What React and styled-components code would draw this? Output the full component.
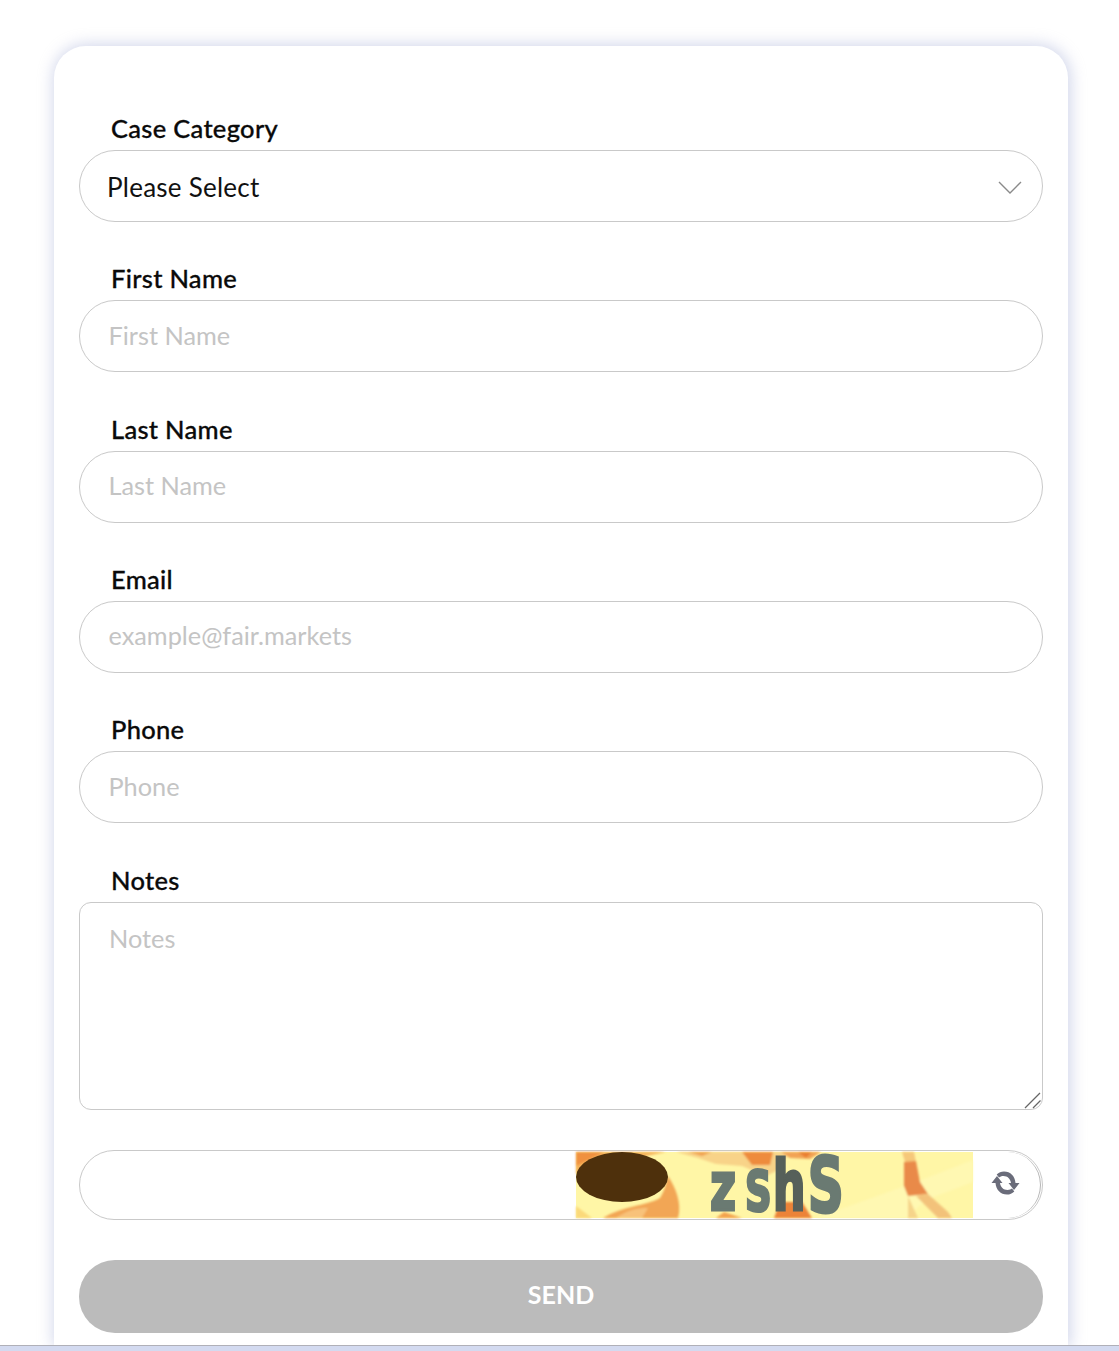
import React from "react";
import styled, { createGlobalStyle } from "styled-components";

const Global = createGlobalStyle`
  html, body { margin: 0; padding: 0; background: #fff; }
  body { font-family: "Lato", "Open Sans", sans-serif; overflow: hidden; }
  * { box-sizing: border-box; }
`;
const Page = styled.div`
  height: 1351px;
  overflow: hidden;
  padding: 46px 51px 0 54px;
  position: relative;
`;
const Card = styled.form`
  background: #fff;
  border-radius: 32px 32px 0 0;
  box-shadow: 1px 0 15px 2px rgba(188, 196, 226, 0.68);
  padding: 68px 25px 0;
  height: 1299px;
  display: flex;
  flex-direction: column;
`;
const Field = styled.div`
  display: flex;
  flex-direction: column;
  height: ${(p) => p.$h || 150.33}px;
`;
const Label = styled.label`
  font-size: 25.5px;
  font-weight: 500;
  letter-spacing: 0.3px;
  color: #0a0a0a;
  line-height: 29px;
  height: 36px;
  padding: 0 0 0 32px;
  -webkit-text-stroke: 0.3px #0a0a0a;
`;
const Input = styled.input`
  height: 72px;
  width: 100%;
  border: 1px solid #c9c9c9;
  border-radius: 36px;
  padding: 0 29px 3px 28.5px;
  font: inherit;
  font-size: 25.3px;
  outline: none;
  background: #fff;
  &::placeholder { color: #c4c4c4; opacity: 1; }
`;
const SelectBox = styled.div`
  height: 72px;
  border: 1px solid #c9c9c9;
  border-radius: 36px;
  padding: 1px 20px 0 27px;
  font-size: 26px;
  letter-spacing: 0.25px;
  color: #111;
  display: flex;
  align-items: center;
  justify-content: space-between;
`;
const SelectArrow = styled.svg`
  margin-top: 3px;
  flex: none;
`;
const NotesWrap = styled.div`
  position: relative;
  height: 208px;
`;
const Notes = styled.textarea`
  display: block;
  width: 100%;
  height: 100%;
  border: 1px solid #c9c9c9;
  border-radius: 12px;
  padding: 20px 29px;
  font: inherit;
  font-size: 25.3px;
  outline: none;
  resize: none;
  &::placeholder { color: #c4c4c4; opacity: 1; }
`;
const Grip = styled.svg`
  position: absolute;
  right: 1px;
  bottom: 1px;
`;
const CaptchaRow = styled.div`
  height: 70px;
  margin-top: 4px;
  border: 1px solid #c9c9c9;
  border-radius: 35px;
  display: flex;
  align-items: stretch;
`;
const CaptchaInput = styled.input`
  flex: 1;
  min-width: 0;
  border: none;
  outline: none;
  background: transparent;
  border-radius: 35px 0 0 35px;
`;
const CaptchaImage = styled.svg`
  width: 397px;
  height: 66px;
  margin-top: 1px;
  display: block;
  flex: none;
  overflow: visible;
`;
const Refresh = styled.div`
  width: 68px;
  flex: none;
  border-right: 1px solid #b5b5b5;
  border-radius: 0 35px 35px 0;
  margin: 1px 1px 1px 0;
  padding: 0 2px 3px 0;
  display: flex;
  align-items: center;
  justify-content: center;
  color: #6a6c7a;
`;
const Send = styled.button`
  height: 73px;
  margin-top: 40px;
  padding-bottom: 5px;
  flex: none;
  width: 100%;
  border: none;
  border-radius: 36px;
  background: #bbbbbb;
  color: #fff;
  font: inherit;
  font-size: 25px;
  font-weight: 700;
`;
const BottomStrip = styled.div`
  position: absolute;
  left: 0;
  right: 0;
  bottom: 0;
  height: 6px;
  background: #d3daf0;
  border-top: 1px solid #b0b0b8;
`;

const Chevron = () => (
  <SelectArrow width="24" height="14" viewBox="0 0 24 14" fill="none" stroke="#8a8a8a" strokeWidth="1.4">
    <path d="M1 1 L12 12 L23 1" />
  </SelectArrow>
);

const RefreshIcon = () => (
  <svg width="29" height="24" viewBox="0 0 28 24" fill="currentColor">
    <path d="M0 12 L5.5 5 L11 12 H8.5 C9 16.2 12 19 16 19 C18 19 19.5 18.3 20.5 17.6 L22.8 20.4 C20.8 22.4 18.3 23.5 15.5 23.5 C9 23.5 4.6 18.8 4 12 Z" />
    <path d="M28 12 L22.5 19 L17 12 H19.5 C19 7.8 16 5 12 5 C10 5 8.5 5.7 7.5 6.4 L5.2 3.6 C7.2 1.6 9.7 .5 12.5 .5 C19 .5 23.4 5.2 24 12 Z" />
  </svg>
);

const Captcha = () => (
  <CaptchaImage viewBox="0 0 397 66" preserveAspectRatio="none" role="img">
    <defs>
      <filter id="soft"><feGaussianBlur stdDeviation="1.2" /></filter>
      <filter id="tiny"><feGaussianBlur stdDeviation="0.6" /></filter>
    </defs>
    <rect width="397" height="66" fill="#fff6a6" />
    <g filter="url(#soft)">
      <path d="M240 66 L340 30 L397 8 V30 L350 48 L330 66 Z" fill="#fff9b8" opacity="0.65" />
      <path d="M0 0 H90 L60 6 L20 8 L0 22 Z" fill="#f5b25a" />
      <path d="M0 0 H28 L0 14 Z" fill="#f0913f" />
      <path d="M27 66 C46 54 70 54 84 46 C90 36 90 30 92 24 C100 36 106 52 102 66 Z" fill="#f2a655" />
      <path d="M40 66 C52 58 60 56 72 56 L66 66 Z" fill="#f8c27a" />
      <path d="M0 54 L16 66 H0 Z" fill="#fbd97a" />
      <path d="M100 0 H212 L206 16 L190 24 L166 14 L140 12 L122 6 Z" fill="#f8d388" />
      <path d="M112 0 L136 0 L126 4 Z" fill="#f0a050" />
      <path d="M166 0 H197 L194 13 L176 13 Z" fill="#ee8b3c" />
      <path d="M205 0 H245 L234 7 L214 6 Z" fill="#f2a354" />
      <path d="M222 0 H236 L230 6 Z" fill="#e97f33" />
      <path d="M198 66 L204 50 L226 50 L236 66 Z" fill="#ec8337" />
      <path d="M140 66 L148 60 L166 66 Z" fill="#f3a24d" />
      <path d="M326 0 L338 0 L340 10 L329 10 Z" fill="#f6c87a" />
      <path d="M328 10 L340 9 L344 30 L352 42 L332 44 L328 34 Z" fill="#e98a48" />
      <path d="M340 44 L352 42 L372 60 L376 66 H362 Z" fill="#f3c27a" />
      <path d="M332 44 L342 66 H332 Z" fill="#f6d48a" />
    </g>
    <ellipse cx="46" cy="25" rx="46" ry="25" fill="#4e300c" />
    <g filter="url(#tiny)" fontFamily="'DejaVu Sans', sans-serif" fontWeight="700" transform="scale(0.66 1)">
      <text y="58" fill="#6b7a72" stroke="#6b7a72" strokeWidth="3">
        <tspan x="203" fontSize="68">z</tspan>
        <tspan x="256" fontSize="56">S</tspan>
        <tspan x="298" fontSize="70" fill="#56605a" stroke="#56605a">h</tspan>
        <tspan x="351" fontSize="76" y="60">S</tspan>
      </text>
    </g>
  </CaptchaImage>
);

export default function App() {
  return (
    <>
      <Global />
      <Page>
        <Card>
          <Field>
            <Label>Case Category</Label>
            <SelectBox>Please Select<Chevron /></SelectBox>
          </Field>
          <Field>
            <Label>First Name</Label>
            <Input placeholder="First Name" />
          </Field>
          <Field>
            <Label>Last Name</Label>
            <Input placeholder="Last Name" />
          </Field>
          <Field>
            <Label>Email</Label>
            <Input placeholder="example@fair.markets" />
          </Field>
          <Field>
            <Label>Phone</Label>
            <Input placeholder="Phone" />
          </Field>
          <Field $h={280}>
            <Label>Notes</Label>
            <NotesWrap>
              <Notes placeholder="Notes" />
              <Grip width="20" height="20" viewBox="0 0 20 20" stroke="#666" strokeWidth="1.3">
                <path d="M3 19 L18 4 M11 19 L18.5 11.5" />
              </Grip>
            </NotesWrap>
          </Field>
          <CaptchaRow>
            <CaptchaInput aria-label="Captcha" />
            <Captcha />
            <Refresh><RefreshIcon /></Refresh>
          </CaptchaRow>
          <Send type="button">SEND</Send>
        </Card>
        <BottomStrip />
      </Page>
    </>
  );
}
